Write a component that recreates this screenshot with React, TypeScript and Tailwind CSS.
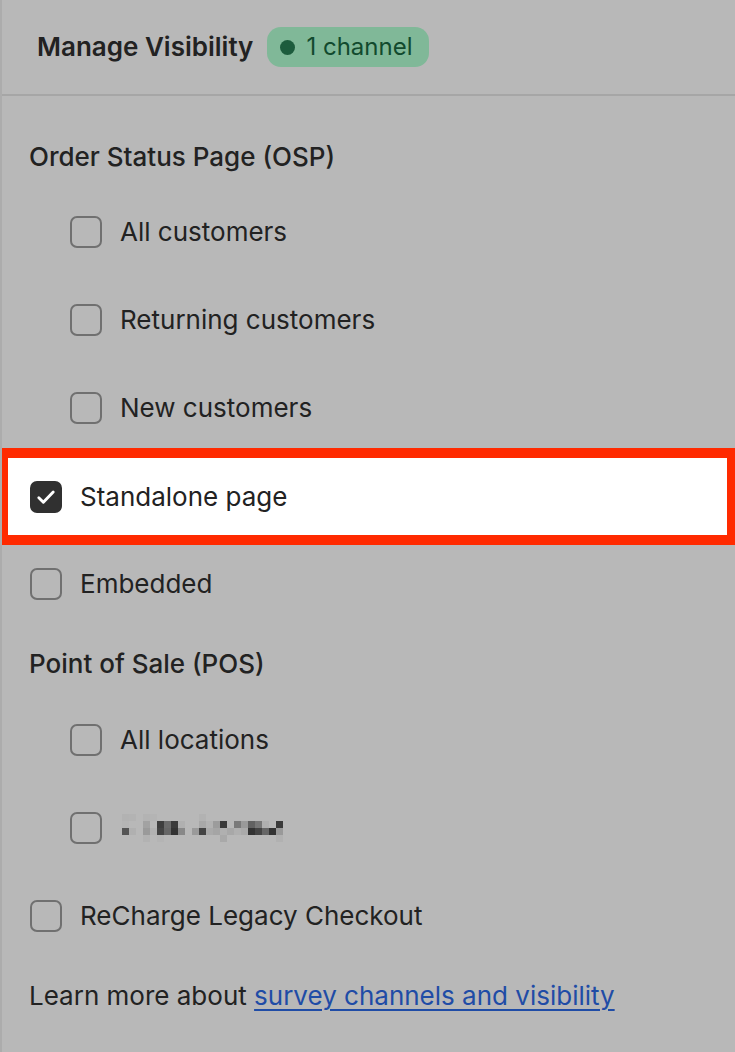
import React from 'react';

// pixelated (redacted) location name
const MOSAIC: string[][] = [
  ['#b2b2b2', '#b3b3b3', '#b8b8b8', '#b3b3b3', '#b4b4b4', '#b8b8b8', '#b8b8b8', '#b8b8b8', '#b8b8b8', '#b8b8b8', '#b8b8b8', '#b2b2b2', '#b8b8b8', '#b8b8b8', '#b8b8b8', '#b8b8b8', '#b8b8b8', '#b8b8b8', '#b8b8b8', '#b8b8b8', '#b8b8b8', '#b8b8b8', '#b8b8b8'],
  ['#b5b5b5', '#b8b8b8', '#b8b8b8', '#a2a2a2', '#b8b8b8', '#3e3e3e', '#6a6a6a', '#3a3a3a', '#b0b0b0', '#b8b8b8', '#b8b8b8', '#a8a8a8', '#b2b2b2', '#9c9c9c', '#3a3a3a', '#b8b8b8', '#7a7a7a', '#9a9a9a', '#626262', '#777777', '#b0b0b0', '#b8b8b8', '#3a3a3a'],
  ['#555555', '#b0b0b0', '#b8b8b8', '#9a9a9a', '#b2b2b2', '#444444', '#666666', '#333333', '#888888', '#b8b8b8', '#9a9a9a', '#444444', '#aaaaaa', '#a5a5a5', '#b0b0b0', '#a8a8a8', '#b0b0b0', '#aaaaaa', '#333333', '#444444', '#666666', '#333333', '#999999'],
  ['#b8b8b8', '#b8b8b8', '#b8b8b8', '#b2b2b2', '#b8b8b8', '#b4b4b4', '#b8b8b8', '#b8b8b8', '#b8b8b8', '#b8b8b8', '#b8b8b8', '#b8b8b8', '#b8b8b8', '#b8b8b8', '#a9a9a9', '#b8b8b8', '#b8b8b8', '#b8b8b8', '#b8b8b8', '#b8b8b8', '#b8b8b8', '#b8b8b8', '#b1b1b1'],
];

const Box = ({ checked = false }: { checked?: boolean }) =>
  checked ? (
    <div className="w-[32px] h-[32px] rounded-[7px] bg-[#303030] flex items-center justify-center shrink-0">
      <svg width="24" height="24" viewBox="0 0 20 20" fill="none" stroke="white" strokeWidth="2.4" strokeLinecap="round" strokeLinejoin="round">
        <path d="M4 10.6l3.8 3.8 8.2-8.6" />
      </svg>
    </div>
  ) : (
    <div className="w-[32px] h-[32px] rounded-[7px] border-2 border-[#707070] shrink-0" />
  );

const Row = ({ label, indent = false, children }: { label?: string; indent?: boolean; children?: React.ReactNode }) => (
  <div className={`h-[88px] flex items-center gap-[18px] ${indent ? 'pl-[68px]' : 'pl-[28px]'}`}>
    <Box />
    {label ? <span className="text-[26px] leading-[32px] text-[#222]">{label}</span> : children}
  </div>
);

export default function App() {
  return (
    <div className="min-h-[1052px] bg-[#b8b8b8] border-l-2 border-[#acacac] text-[#222]" style={{ fontFamily: 'Inter, "Noto Sans", sans-serif' }}>
      {/* Header */}
      <div className="h-[96px] border-b-2 border-[#a6a6a6] flex items-center pl-[35px] gap-[14px]">
        <h2 className="text-[26px] leading-[32px] font-semibold text-[#222]">Manage Visibility</h2>
        <div className="h-[40px] rounded-[14px] bg-[#80b898] flex items-center pl-[13px] pr-[17px] gap-[11px]">
          <span className="w-[15px] h-[15px] rounded-full bg-[#1d5c3d]" />
          <span className="text-[24px] leading-[32px] text-[#124a2e]">1 channel</span>
        </div>
      </div>

      <h3 className="mt-[45px] pl-[27px] text-[26px] leading-[32px] font-medium">Order Status Page (OSP)</h3>
      <div className="mt-[15px]">
        <Row indent label="All customers" />
        <Row indent label="Returning customers" />
        <Row indent label="New customers" />
        <div className="-mt-[4px] -mb-[5px] h-[97px] bg-white border-y-[10px] border-l-[6px] border-r-[8px] border-[#ff2a00] flex items-center pl-[22px] gap-[18px]">
          <Box checked />
          <span className="text-[26px] leading-[32px] text-[#222]">Standalone page</span>
        </div>
        <Row label="Embedded" />
      </div>

      <h3 className="mt-[20px] pl-[27px] text-[26px] leading-[32px] font-medium">Point of Sale (POS)</h3>
      <div className="mt-[16px]">
        <Row indent label="All locations" />
        <Row indent>
          <div className="flex flex-col ml-[2px]">
            {MOSAIC.map((r, i) => (
              <div key={i} className="flex">
                {r.map((c, j) => (
                  <div key={j} className="w-[7px] h-[7px]" style={{ backgroundColor: c }} />
                ))}
              </div>
            ))}
          </div>
        </Row>
        <Row label="ReCharge Legacy Checkout" />
      </div>

      <p className="mt-[20px] pl-[27px] text-[26px] leading-[32px]">
        Learn more about{' '}
        <a href="#" className="text-[#1f4ca6] underline underline-offset-[4px] decoration-2">survey channels and visibility</a>
      </p>
    </div>
  );
}
